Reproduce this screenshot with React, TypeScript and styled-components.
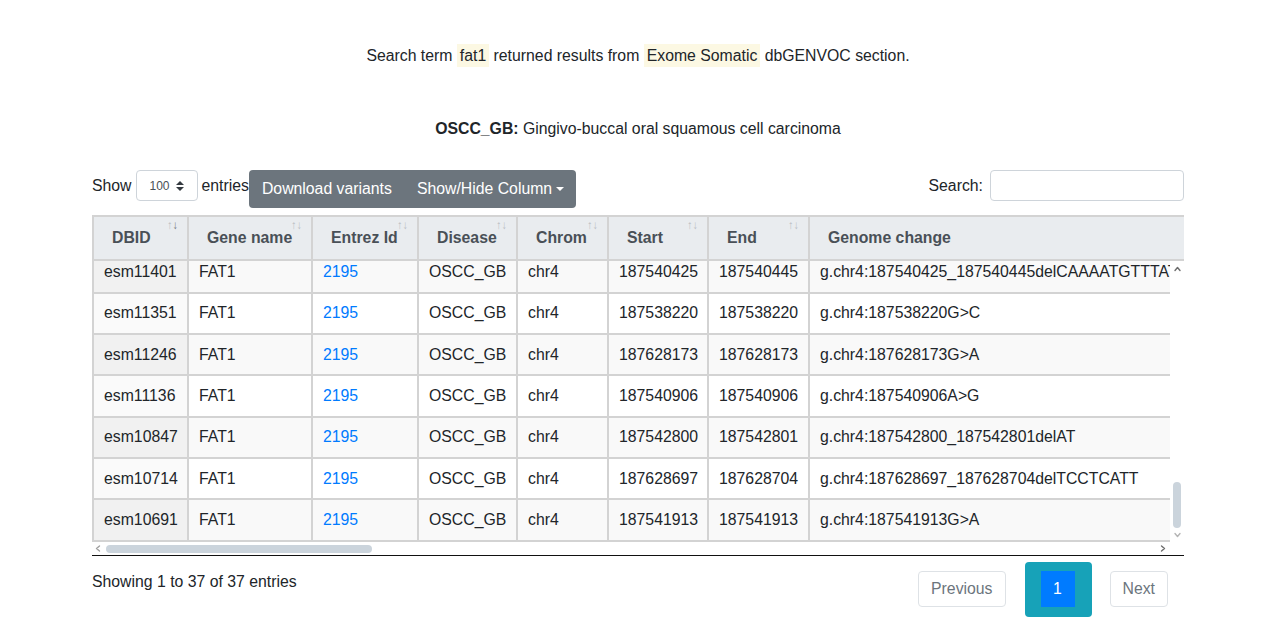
import React, { useLayoutEffect, useRef } from "react";
import styled, { createGlobalStyle } from "styled-components";

const GlobalStyle = createGlobalStyle`
  html, body { margin: 0; padding: 0; background: #fff; }
  body {
    font-family: "Liberation Sans", Arial, sans-serif;
    font-size: 15.8px;
    line-height: 24px;
    color: #212529;
  }
  * { box-sizing: border-box; }
`;

const BORDER = "#d3d3d3";

const Page = styled.div`
  padding: 44px 88px 0 92px;
`;

const Intro = styled.p`
  margin: 0;
  text-align: center;
`;

const Mark = styled.mark`
  background: #fcf8e3;
  color: inherit;
  padding: 3px;
`;

const Title = styled.p`
  margin: 49px 0 0;
  text-align: center;
`;

const Controls = styled.div`
  margin-top: 29px;
  display: flex;
  justify-content: space-between;
  align-items: flex-start;
  height: 38px;
`;

const LeftControls = styled.div`
  display: flex;
  align-items: flex-start;
`;

const LengthLabel = styled.label`
  display: flex;
  align-items: center;
  height: 31px;
  gap: 4px;
`;

const LengthSelect = styled.div`
  display: flex;
  align-items: center;
  justify-content: space-between;
  width: 62px;
  height: 31px;
  padding: 0 13px;
  border: 1px solid #ced4da;
  border-radius: 4px;
  font-size: 12px;
  color: #495057;
`;

const ButtonGroup = styled.div`
  display: flex;
  background: #6c757d;
  border-radius: 4px;
`;

const GroupButton = styled.button`
  display: flex;
  align-items: center;
  background: transparent;
  border: none;
  color: #fff;
  font-family: inherit;
  font-size: 15.8px;
  line-height: 24px;
  padding: 7px 12px 7px 13px;
  cursor: pointer;
`;

const Caret = styled.span`
  display: inline-block;
  margin-left: 4px;
  border-top: 4.8px solid #fff;
  border-left: 4.4px solid transparent;
  border-right: 4.4px solid transparent;
`;

const SearchLabel = styled.label`
  display: flex;
  align-items: center;
  height: 31px;
  gap: 7px;
`;

const SearchInput = styled.input`
  width: 194px;
  height: 31px;
  border: 1px solid #ced4da;
  border-radius: 4px;
  font-family: inherit;
  font-size: 14px;
  padding: 0 8px;
`;

const TableWrap = styled.div`
  margin-top: 7px;
`;

const ScrollHead = styled.div`
  overflow: hidden;
`;

/* Body area: scrolled viewport plus its scroll bars, laid out as a grid */
const ScrollBody = styled.div`
  display: grid;
  grid-template-columns: 1fr 14px;
  grid-template-rows: 281px 13px;
  border-bottom: 1px solid #111;
`;

const Viewport = styled.div`
  overflow: hidden;
  min-width: 0;
`;

const VTrack = styled.div`
  display: flex;
  flex-direction: column;
  align-items: center;
  padding: 5px 0 4px;
  background: #fff;
`;

const HTrack = styled.div`
  display: flex;
  align-items: center;
  padding: 0 4px 0 3px;
  background: #fff;
`;

const Corner = styled.div`
  background: #fff;
`;

const Thumb = styled.div<{ $axis: "v" | "h"; $size: number }>`
  background: #cbd4dc;
  border-radius: 4px;
  flex: none;
  width: ${(p) => (p.$axis === "v" ? "8px" : `${p.$size}px`)};
  height: ${(p) => (p.$axis === "v" ? `${p.$size}px` : "8px")};
  margin-top: ${(p) => (p.$axis === "v" ? "auto" : "0")};
  margin-bottom: ${(p) => (p.$axis === "v" ? "4px" : "0")};
  margin-left: ${(p) => (p.$axis === "h" ? "5px" : "0")};
  margin-right: ${(p) => (p.$axis === "h" ? "auto" : "0")};
`;

const Grid = styled.table<{ $w: number }>`
  width: ${(p) => p.$w}px;
  table-layout: fixed;
  border-collapse: separate;
  border-spacing: 0;
`;

const Col = styled.col<{ $w: number }>`
  width: ${(p) => p.$w}px;
`;

const HeadCell = styled.th`
  position: relative;
  background: #e9ecef;
  color: #495057;
  font-weight: 700;
  text-align: left;
  padding: 9px 18px;
  white-space: nowrap;
  overflow: hidden;
  border-top: 2px solid ${BORDER};
  border-right: 2px solid ${BORDER};
  border-bottom: 2px solid ${BORDER};
  &:first-child {
    border-left: 2px solid ${BORDER};
  }
`;

const SortIcon = styled.span`
  position: absolute;
  top: 2px;
  right: 9px;
  display: flex;
  font-size: 11.5px;
  line-height: 12px;
  font-weight: 400;
`;

const Arrow = styled.span<{ $on?: boolean }>`
  display: inline-block;
  width: 5.5px;
  text-align: center;
  color: #495057;
  opacity: ${(p) => (p.$on ? 0.75 : 0.3)};
`;

const Row = styled.tr`
  background: #fff;
  & > td:first-child {
    background: #fafafa;
  }
  &:nth-child(odd) {
    background: #f9f9f9;
  }
  &:nth-child(odd) > td:first-child {
    background: #f1f1f1;
  }
`;

const Cell = styled.td`
  padding: 7.66px 10px;
  white-space: nowrap;
  overflow: hidden;
  border-right: 2px solid ${BORDER};
  border-bottom: 2px solid ${BORDER};
  &:first-child {
    border-left: 2px solid ${BORDER};
  }
`;

const GeneLink = styled.a`
  color: #007bff;
  text-decoration: none;
`;

const Footer = styled.div`
  display: flex;
  justify-content: space-between;
  align-items: flex-start;
`;

const Info = styled.div`
  padding-top: 14px;
`;

const Pagination = styled.ul`
  display: flex;
  align-items: flex-start;
  list-style: none;
  margin: 6px 16px 0 0;
  padding: 0;
`;

const PageButton = styled.li<{ $side: "prev" | "next" }>`
  margin-top: 9px;
  margin-right: ${(p) => (p.$side === "prev" ? "19px" : "0")};
  margin-left: ${(p) => (p.$side === "next" ? "18px" : "0")};
  padding: 5px 12px;
  border: 1px solid #dee2e6;
  border-radius: 4px;
  color: #6c757d;
  line-height: 24px;
`;

const ActiveWrap = styled.li`
  background: #17a2b8;
  border-radius: 4px;
  padding: 9px 17px 10px 16px;
`;

const ActivePage = styled.span`
  display: flex;
  align-items: center;
  justify-content: center;
  width: 34px;
  height: 36px;
  background: #007bff;
  color: #fff;
`;

type Column = { title: string; w: number; sort: "none" | "both" | "desc" };

const columns: Column[] = [
  { title: "DBID", w: 97, sort: "desc" },
  { title: "Gene name", w: 124, sort: "both" },
  { title: "Entrez Id", w: 106, sort: "both" },
  { title: "Disease", w: 99, sort: "both" },
  { title: "Chrom", w: 91, sort: "both" },
  { title: "Start", w: 100, sort: "both" },
  { title: "End", w: 101, sort: "both" },
  { title: "Genome change", w: 520, sort: "none" },
  { title: "Protein change", w: 260, sort: "none" },
  { title: "Consequence", w: 300, sort: "none" },
  { title: "Variant type", w: 220, sort: "none" },
  { title: "Reference allele", w: 260, sort: "none" },
  { title: "Tumor allele", w: 260, sort: "none" },
  { title: "dbSNP ID", w: 240, sort: "none" },
  { title: "Sample ID", w: 240, sort: "none" },
  { title: "Tumor VAF", w: 220, sort: "none" },
  { title: "ClinVar", w: 300, sort: "none" },
  { title: "COSMIC", w: 280, sort: "none" },
  { title: "PubMed", w: 460, sort: "none" },
];

const totalWidth = columns.reduce((s, c) => s + c.w, 0);

type Variant = { id: string; start: string; end: string; change: string; ref: string; alt: string; type: string };

const bases = ["A", "C", "G", "T"];

const hidden: Variant[] = Array.from({ length: 30 }, (_, i) => {
  const start = 187500000 + ((i * 7919 + 4321) % 130000);
  const ref = bases[i % 4];
  const alt = bases[(i + 2) % 4];
  return {
    id: `esm${14980 - i * 118}`,
    start: String(start),
    end: String(start),
    change: `g.chr4:${start}${ref}>${alt}`,
    ref,
    alt,
    type: "SNP",
  };
});

const visible: Variant[] = [
  { id: "esm11401", start: "187540425", end: "187540445", change: "g.chr4:187540425_187540445delCAAAATGTTTATTTTAAAAGC", ref: "CAAAATGTTTATTTTAAAAGC", alt: "-", type: "DEL" },
  { id: "esm11351", start: "187538220", end: "187538220", change: "g.chr4:187538220G>C", ref: "G", alt: "C", type: "SNP" },
  { id: "esm11246", start: "187628173", end: "187628173", change: "g.chr4:187628173G>A", ref: "G", alt: "A", type: "SNP" },
  { id: "esm11136", start: "187540906", end: "187540906", change: "g.chr4:187540906A>G", ref: "A", alt: "G", type: "SNP" },
  { id: "esm10847", start: "187542800", end: "187542801", change: "g.chr4:187542800_187542801delAT", ref: "AT", alt: "-", type: "DEL" },
  { id: "esm10714", start: "187628697", end: "187628704", change: "g.chr4:187628697_187628704delTCCTCATT", ref: "TCCTCATT", alt: "-", type: "DEL" },
  { id: "esm10691", start: "187541913", end: "187541913", change: "g.chr4:187541913G>A", ref: "G", alt: "A", type: "SNP" },
];

const rows = [...hidden, ...visible];

function SelectArrows() {
  return (
    <svg width="8" height="10" viewBox="0 0 8 10" aria-hidden>
      <path d="M4 0 L8 4 H0 Z" fill="#343a40" />
      <path d="M0 6 H8 L4 10 Z" fill="#343a40" />
    </svg>
  );
}

function Chevron({ dir, shade }: { dir: "up" | "down" | "left" | "right"; shade: string }) {
  const d = {
    up: "M1 4.5 L3.5 1.5 L6 4.5",
    down: "M1 1.5 L3.5 4.5 L6 1.5",
    left: "M4.5 1 L1.5 3.5 L4.5 6",
    right: "M1.5 1 L4.5 3.5 L1.5 6",
  }[dir];
  const vertical = dir === "up" || dir === "down";
  return (
    <svg width={vertical ? 7 : 6} height={vertical ? 6 : 7} viewBox={vertical ? "0 0 7 6" : "0 0 6 7"} aria-hidden style={{ flex: "none" }}>
      <path d={d} fill="none" stroke={shade} strokeWidth="1.4" strokeLinecap="round" strokeLinejoin="round" />
    </svg>
  );
}

function ColGroup() {
  return (
    <colgroup>
      {columns.map((c) => (
        <Col key={c.title} $w={c.w} />
      ))}
    </colgroup>
  );
}

export default function App() {
  const bodyRef = useRef<HTMLDivElement>(null);
  const headRef = useRef<HTMLDivElement>(null);

  useLayoutEffect(() => {
    const el = bodyRef.current;
    if (el) el.scrollTop = el.scrollHeight;
  }, []);

  return (
    <>
      <GlobalStyle />
      <Page>
        <Intro>
          Search term <Mark>fat1</Mark> returned results from <Mark>Exome Somatic</Mark> dbGENVOC section.
        </Intro>
        <Title>
          <strong>OSCC_GB:</strong> Gingivo-buccal oral squamous cell carcinoma
        </Title>

        <Controls>
          <LeftControls>
            <LengthLabel>
              Show
              <LengthSelect>
                100
                <SelectArrows />
              </LengthSelect>
              entries
            </LengthLabel>
            <ButtonGroup>
              <GroupButton>Download variants</GroupButton>
              <GroupButton>
                Show/Hide Column
                <Caret />
              </GroupButton>
            </ButtonGroup>
          </LeftControls>
          <SearchLabel>
            Search:
            <SearchInput type="search" />
          </SearchLabel>
        </Controls>

        <TableWrap>
          <ScrollHead ref={headRef}>
            <Grid $w={totalWidth}>
              <ColGroup />
              <thead>
                <tr>
                  {columns.map((c) => (
                    <HeadCell key={c.title}>
                      {c.title}
                      {c.sort !== "none" && (
                        <SortIcon>
                          <Arrow>↑</Arrow>
                          <Arrow $on={c.sort === "desc"}>↓</Arrow>
                        </SortIcon>
                      )}
                    </HeadCell>
                  ))}
                </tr>
              </thead>
            </Grid>
          </ScrollHead>
          <ScrollBody>
            <Viewport ref={bodyRef}>
              <Grid $w={totalWidth}>
                <ColGroup />
                <tbody>
                  {rows.map((r, i) => (
                    <Row key={r.id}>
                      <Cell>{r.id}</Cell>
                      <Cell>FAT1</Cell>
                      <Cell>
                        <GeneLink href="#">2195</GeneLink>
                      </Cell>
                      <Cell>OSCC_GB</Cell>
                      <Cell>chr4</Cell>
                      <Cell>{r.start}</Cell>
                      <Cell>{r.end}</Cell>
                      <Cell>{r.change}</Cell>
                      <Cell>{r.type === "SNP" ? `p.R${1200 + i * 37}Q` : "p.?"}</Cell>
                      <Cell>{r.type === "SNP" ? "missense_variant" : "frameshift_variant"}</Cell>
                      <Cell>{r.type}</Cell>
                      <Cell>{r.ref}</Cell>
                      <Cell>{r.alt}</Cell>
                      <Cell>-</Cell>
                      <Cell>{`OSCC_GB_${String(100 + i)}`}</Cell>
                      <Cell>{(0.12 + (i % 7) * 0.05).toFixed(2)}</Cell>
                      <Cell>-</Cell>
                      <Cell>-</Cell>
                      <Cell>-</Cell>
                    </Row>
                  ))}
                </tbody>
              </Grid>
            </Viewport>
            <VTrack>
              <Chevron dir="up" shade="#6c6c6c" />
              <Thumb $axis="v" $size={46} />
              <Chevron dir="down" shade="#b5b5b5" />
            </VTrack>
            <HTrack>
              <Chevron dir="left" shade="#a0a0a0" />
              <Thumb $axis="h" $size={266} />
              <Chevron dir="right" shade="#6c6c6c" />
            </HTrack>
            <Corner />
          </ScrollBody>
        </TableWrap>

        <Footer>
          <Info>Showing 1 to 37 of 37 entries</Info>
          <Pagination>
            <PageButton $side="prev">Previous</PageButton>
            <ActiveWrap>
              <ActivePage>1</ActivePage>
            </ActiveWrap>
            <PageButton $side="next">Next</PageButton>
          </Pagination>
        </Footer>
      </Page>
    </>
  );
}
